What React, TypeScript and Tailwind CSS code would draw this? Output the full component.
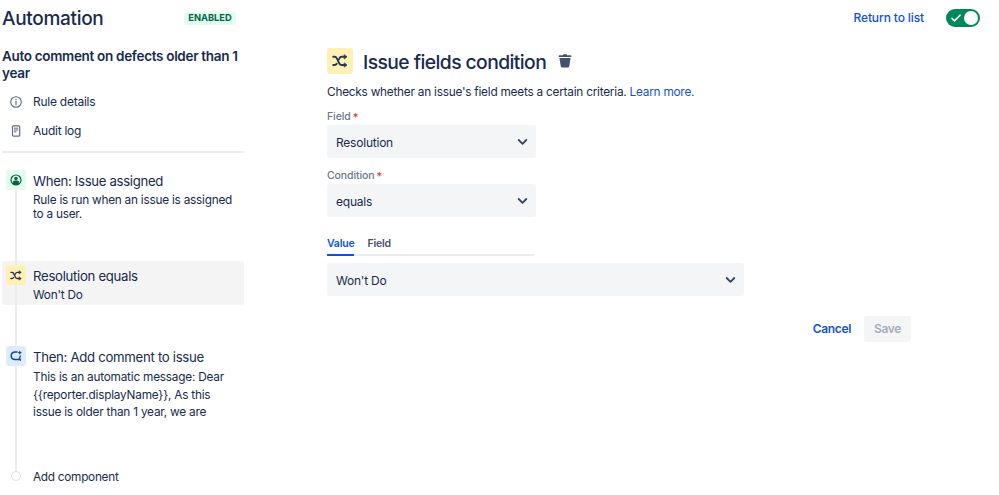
import type { ReactNode } from "react";

const LINK = "text-[#1053CE]";

function ShuffleIcon({ className }: { className: string }) {
  return (
    <svg viewBox="0 0 16 14" className={className} fill="none" stroke="#253858" strokeWidth="1.9" strokeLinecap="round" strokeLinejoin="round">
      <path d="M1.200 2.800h1.400c1 0 1.600.400 2.100 1.300l2.600 5.200c.500 1.100 1.100 1.700 2.300 1.700h3.200" />
      <path d="M1.200 11h1.400c1 0 1.600-.400 2.100-1.300M6.900 5.400l.5-1C7.900 3.300 8.500 2.800 9.600 2.800h3.200" />
      <path d="M12.500.9l2.500 1.900-2.500 1.900zM12.500 9.100L15 11l-2.500 1.900z" fill="#253858" strokeWidth=".8" />
    </svg>
  );
}

function UserIcon() {
  return (
    <svg viewBox="0 0 12 12" className="h-3 w-3" fill="none">
      <circle cx="6" cy="6" r="5" stroke="#006644" strokeWidth="1.200" />
      <circle cx="6" cy="4.400" r="1.700" fill="#006644" />
      <path d="M3 10V8.200c0-1 .700-1.600 1.600-1.600h2.800c.900 0 1.600.600 1.600 1.600V10c-1.700 1.300-4.300 1.300-6 0z" fill="#006644" />
    </svg>
  );
}

function ActionIcon() {
  return (
    <svg viewBox="0 0 12 12" className="h-3 w-3" fill="none" stroke="#0747A6" strokeWidth="1.400" strokeLinecap="round" strokeLinejoin="round">
      <path d="M7 2H5.300C2.900 2 1.200 3.600 1.200 5.800s1.700 3.700 4.100 3.700h4.900" />
      <path d="M10.300 6c0 1-.400 1.800-1.100 2.500l1.200 1.700" strokeWidth="1.300" />
      <path d="M9.800 1.400v2.400M8.600 2.600H11" strokeWidth="1.200" />
    </svg>
  );
}

function InfoIcon() {
  return (
    <svg viewBox="0 0 12 12" className="h-3 w-3" fill="none" stroke="#5E6C84">
      <circle cx="6" cy="6" r="5.300" strokeWidth="1.100" />
      <path d="M6 5.400v3" strokeWidth="1.200" strokeLinecap="round" />
      <circle cx="6" cy="3.600" r=".75" fill="#5E6C84" stroke="none" />
    </svg>
  );
}

function LogIcon() {
  return (
    <svg viewBox="0 0 10 12" className="h-3 w-2.5" fill="none" stroke="#5E6C84">
      <rect x="1.500" y=".8" width="7.200" height="10.400" rx="1" strokeWidth="1.200" />
      <path d="M3 3.200h4.200M3 5h4.200M3 6.800h2.400" strokeWidth="1" />
    </svg>
  );
}

function TrashIcon() {
  return (
    <svg viewBox="0 0 14 14" className="h-3.5 w-3.5" fill="#42526E">
      <path d="M1.500 1.200h3.300L5.500.3h3l.7.900h3.300c.500 0 .800.300.800.800v1H.7V2c0-.500.300-.800.800-.800z" />
      <path d="M1.400 3.900h11.200l-1.400 8.600c-.100.700-.500 1.100-1.200 1.100H4c-.700 0-1.100-.400-1.200-1.100z" />
    </svg>
  );
}

function Select({ value, className }: { value: string; className: string }) {
  return (
    <button className={`flex h-[33px] items-center justify-between rounded-[3px] bg-[#F4F5F7] pl-[9px] pr-2 ${className}`}>
      <span className="pt-0.5 text-[12px] leading-4 tracking-[-0.220px]">{value}</span>
      <svg viewBox="0 0 11 8" className="h-2 w-[11px]" fill="none" stroke="#344563" strokeWidth="1.800" strokeLinecap="round" strokeLinejoin="round">
        <path d="M1.700 2l3.800 3.800L9.300 2" />
      </svg>
    </button>
  );
}

function Label({ children }: { children: ReactNode }) {
  return (
    <div className="flex h-4 items-center gap-0.5 pt-px text-[10.500px] font-medium tracking-[-0.100px] text-[#6B778C]">
      {children}
      <span className="text-[11px] leading-3 text-[#DE350B]">*</span>
    </div>
  );
}

function Rail({ icon, color, first }: { icon: ReactNode; color: string; first?: boolean }) {
  return (
    <div className="flex w-7 shrink-0 flex-col items-center">
      <div className={`h-1 w-0.5 ${first ? "bg-white" : "bg-[#EBECF0]"}`} />
      <div className={`flex h-5 w-5 items-center justify-center rounded-[3px] ${color}`}>{icon}</div>
      <div className="w-0.5 flex-1 bg-[#EBECF0]" />
    </div>
  );
}

export default function App() {
  return (
    <div className="flex h-[495px] w-[999px] flex-col overflow-hidden bg-white font-['Inter',sans-serif] text-[#172B4D]">
      <header className="flex h-9 shrink-0 items-center pl-0.5 pr-[19px]">
        <h1 className="w-[182px] pt-0.5 text-[19px] font-medium leading-6 tracking-[-0.300px]">Automation</h1>
        <span className="flex h-[13px] w-[52px] items-center justify-center rounded-[3px] bg-[#E3FCEF] text-[9.300px] font-bold text-[#006644]">ENABLED</span>
        <div className="flex-1" />
        <a className={`text-[12px] font-medium tracking-[-0.120px] ${LINK}`}>Return to list</a>
        <div className="ml-[22px] flex h-[18px] w-[34px] items-center justify-between rounded-full bg-[#00875A] pl-[5px] pr-0.5">
          <svg viewBox="0 0 10 8" className="h-2 w-2.5" fill="none" stroke="white" strokeWidth="1.600" strokeLinecap="round" strokeLinejoin="round">
            <path d="M1 4.300l2.600 2.500L9 1.200" />
          </svg>
          <div className="h-3.5 w-3.5 rounded-full bg-white" />
        </div>
      </header>

      <div className="flex flex-1">
        <aside className="ml-0.5 flex w-[242px] shrink-0 flex-col">
          <h2 className="mt-3 whitespace-nowrap text-[13.500px] font-semibold leading-[17px] tracking-[-0.310px]">
            Auto comment on defects older than 1<br />year
          </h2>
          <nav className="mt-[5px] text-[12px] tracking-[-0.250px]">
            <a className="flex h-[29px] items-center">
              <span className="mr-[3px] flex w-7 justify-center"><InfoIcon /></span>Rule details
            </a>
            <a className="flex h-[29px] items-center">
              <span className="mr-[3px] flex w-7 justify-center"><LogIcon /></span>Audit log
            </a>
          </nav>
          <div className="mt-1.5 h-0.5 shrink-0 rounded-full bg-[#EBECF0]" />

          <div className="mt-[13px] flex h-[95px] gap-[3px]">
            <Rail first icon={<UserIcon />} color="bg-[#E3FCEF]" />
            <div className="pt-1.5">
              <h3 className="text-[13.200px] leading-[18px] tracking-[-0.330px]">When: Issue assigned</h3>
              <p className="mt-[3px] whitespace-nowrap text-[11.800px] leading-[14px] tracking-[-0.230px]">Rule is run when an issue is assigned<br />to a user.</p>
            </div>
          </div>
          <div className="flex h-11 gap-[3px] rounded-[3px] bg-[#F4F4F4]">
            <Rail icon={<ShuffleIcon className="h-[11px] w-3" />} color="bg-[#FFF0B3]" />
            <div className="pt-1.5">
              <h3 className="text-[13.200px] leading-[18px] tracking-[-0.300px]">Resolution equals</h3>
              <p className="mt-[3px] text-[11.800px] leading-[14px] tracking-[-0.230px]">Won't Do</p>
            </div>
          </div>
          <div className="flex h-[37px] w-7 justify-center"><div className="w-0.5 bg-[#EBECF0]" /></div>
          <div className="flex h-[129px] gap-[3px]">
            <Rail icon={<ActionIcon />} color="bg-[#DEEBFF]" />
            <div className="pt-1.5">
              <h3 className="text-[13.200px] leading-[18px] tracking-[-0.300px]">Then: Add comment to issue</h3>
              <p className="mt-[3px] whitespace-nowrap text-[11.800px] leading-[17.500px] tracking-[-0.210px]">
                This is an automatic message: Dear<br />{"{{reporter.displayName}}, As this"}<br />issue is older than 1 year, we are
              </p>
            </div>
          </div>
          <div className="flex h-2.5 items-center gap-[3px]">
            <span className="flex w-7 justify-center"><span className="h-2.5 w-2.5 rounded-full border border-[#DFE1E6] bg-white" /></span>
            <span className="pt-0.5 text-[11.800px] leading-4 tracking-[-0.270px]">Add component</span>
          </div>
        </aside>

        <main className="ml-[83px] flex w-[584px] flex-col items-start">
          <div className="mt-3 flex h-[26px] items-center">
            <span className="flex h-[26px] w-[26px] items-center justify-center rounded-[3px] bg-[#FFF0B3]"><ShuffleIcon className="h-3.5 w-4" /></span>
            <h2 className="ml-2.5 whitespace-nowrap pt-0.5 text-[19.300px] font-medium leading-6 tracking-[-0.570px]">Issue fields condition</h2>
            <span className="ml-3"><TrashIcon /></span>
          </div>
          <p className="mt-2.5 whitespace-nowrap text-[11.800px] leading-4 tracking-[-0.225px]">
            Checks whether an issue's field meets a certain criteria. <a className={LINK}>Learn more.</a>
          </p>
          <div className="mt-2"><Label>Field</Label></div>
          <Select value="Resolution" className="mt-px w-[209px]" />
          <div className="mt-[9px]"><Label>Condition</Label></div>
          <Select value="equals" className="mt-px w-[209px]" />
          <div className="mt-5 flex h-[19px] w-[207px] gap-[13px] border-b-2 border-[#EBECF0] text-[10.500px] font-semibold leading-[14px] tracking-[-0.200px] text-[#42526E]">
            <span className={`h-[19px] border-b-2 border-[#1053CE] ${LINK}`}>Value</span>
            <span>Field</span>
          </div>
          <Select value="Won't Do" className="mt-[7px] w-[417px]" />
          <div className="mt-5 flex h-[26px] items-center gap-[13px] self-end text-[12px] font-semibold tracking-[-0.350px]">
            <button className={LINK}>Cancel</button>
            <button className="h-[26px] w-[47px] rounded-[3px] bg-[#F4F5F7] text-[#A5ADBA]">Save</button>
          </div>
        </main>
      </div>
    </div>
  );
}
